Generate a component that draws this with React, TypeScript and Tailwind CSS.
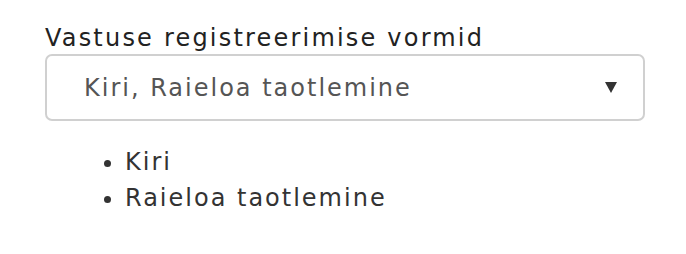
export default function App() {
  const options = ['Kiri', 'Raieloa taotlemine'];

  return (
    <div className="w-[686px] h-[254px] bg-white font-['DejaVu_Sans',sans-serif] tracking-[2px]">
      <div className="pl-[45px] pt-[23px] w-[645px]">
        <label className="block text-[24px] leading-[30px] text-[#222] tracking-[2.2px]">
          Vastuse registreerimise vormid
        </label>
        <div className="mt-[1px] h-[67px] rounded-[7px] border-2 border-[#d0d0d0] flex items-center pl-[37px] pr-[26px]">
          <span className="flex-1 text-[24px] text-[#555]">{options.join(', ')}</span>
          <svg width="12" height="11" viewBox="0 0 12 11">
            <path d="M0 0 H12 L6 11 Z" fill="#333" />
          </svg>
        </div>
        <ul className="list-disc pl-[80px] mt-[23px] text-[24px] leading-[36px] text-[#333]">
          {options.map((o) => (
            <li key={o}>{o}</li>
          ))}
        </ul>
      </div>
    </div>
  );
}
